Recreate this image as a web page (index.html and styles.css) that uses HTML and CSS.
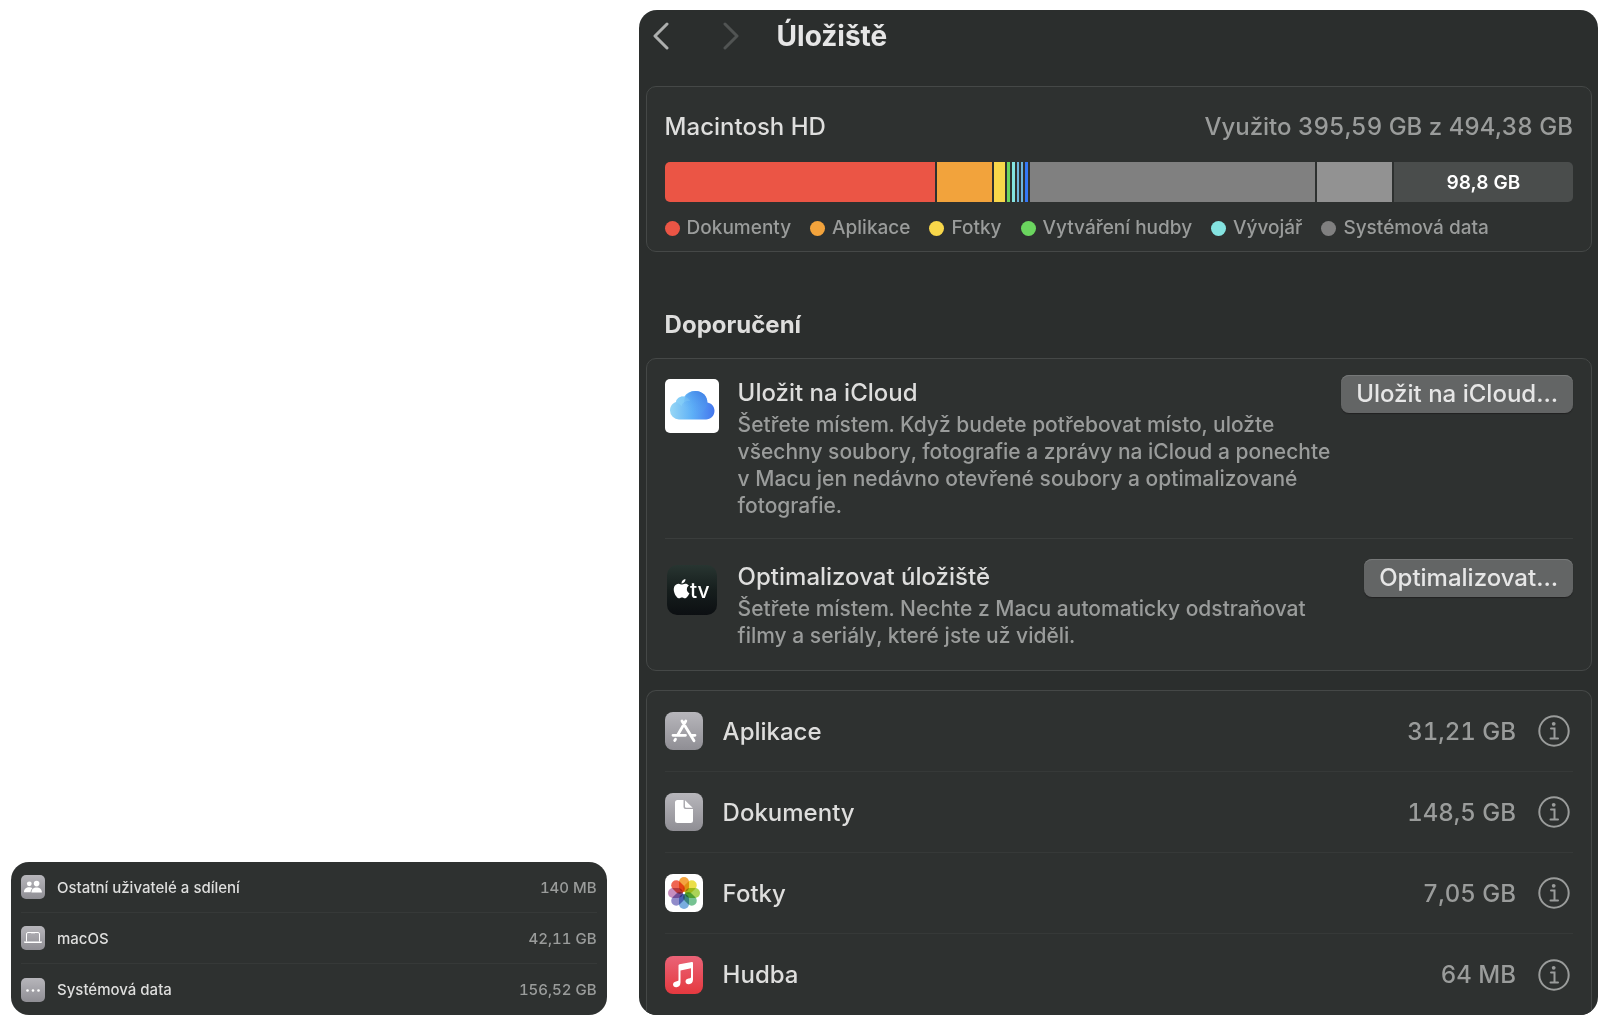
FILE: index.html
```html
<!DOCTYPE html>
<html lang="cs">
<head>
    <meta charset="UTF-8">
    <meta name="viewport" content="width=device-width, initial-scale=1.0">
    <title>Úložiště</title>
    <link rel="stylesheet" href="styles.css">
</head>
<body>
    <aside class="window window-small">
        <ul class="rows">
            <li class="row">
                <svg class="row-icon" viewBox="0 0 24 24" aria-hidden="true">
                    <rect width="24" height="24" rx="5" fill="url(#gray)"/>
                    <g fill="#fff">
                        <circle cx="8.3" cy="8.8" r="2.4"/>
                        <path d="M3 17.2c0-3 2.1-4.9 5.3-4.9 1.3 0 2.4.4 3.2 1-1.2 1-1.8 2.3-1.9 3.9z"/>
                        <circle cx="15.6" cy="8.6" r="2.8"/>
                        <path d="M10.4 17.4c0-3.1 2-5 5.2-5s5.3 1.9 5.3 5z"/>
                    </g>
                </svg>
                <span class="row-name">Ostatní uživatelé a sdílení</span>
                <span class="row-size">140 MB</span>
            </li>
            <li class="row">
                <svg class="row-icon" viewBox="0 0 24 24" aria-hidden="true">
                    <rect width="24" height="24" rx="5" fill="url(#gray)"/>
                    <path d="M5.5 15.5V8q0-1.500 1.500-1.500h10q1.500 0 1.500 1.500v7.500M10 6.800h4" fill="none" stroke="#fff"/>
                    <path d="M3 15.400h18v.6q0 1-1 1H4q-1 0-1-1z" fill="#fff"/>
                </svg>
                <span class="row-name">macOS</span>
                <span class="row-size">42,11 GB</span>
            </li>
            <li class="row">
                <svg class="row-icon" viewBox="0 0 24 24" aria-hidden="true">
                    <rect width="24" height="24" rx="5" fill="url(#gray)"/>
                    <g fill="#fff">
                        <circle cx="6.5" cy="12.5" r="1.3"/>
                        <circle cx="12" cy="12.5" r="1.3"/>
                        <circle cx="17.5" cy="12.5" r="1.3"/>
                    </g>
                </svg>
                <span class="row-name">Systémová data</span>
                <span class="row-size">156,52 GB</span>
            </li>
        </ul>
    </aside>

    <main class="window window-main">
        <header class="titlebar">
            <button class="nav-button" aria-label="Zpět">
                <svg width="16" height="28" viewBox="0 0 16 28"><path d="M14 2 2 14l12 12"/></svg>
            </button>
            <button class="nav-button" aria-label="Vpřed" disabled>
                <svg width="16" height="28" viewBox="0 0 16 28"><path d="M2 2l12 12L2 26"/></svg>
            </button>
            <h1>Úložiště</h1>
        </header>

        <section class="card disk">
            <div class="disk-head">
                <h2>Macintosh HD</h2>
                <span>Využito 395,59 GB z 494,38 GB</span>
            </div>
            <div class="bar">
                <div class="segment red" style="flex-grow: 271"></div>
                <div class="segment orange" style="flex-grow: 56"></div>
                <div class="segment yellow" style="flex-grow: 11"></div>
                <div class="segment green"></div>
                <div class="segment cyan"></div>
                <div class="segment sky"></div>
                <div class="segment sky"></div>
                <div class="segment blue"></div>
                <div class="segment gray" style="flex-grow: 286"></div>
                <div class="segment silver" style="flex-grow: 75"></div>
                <div class="segment free" style="flex-grow: 180">98,8 GB</div>
            </div>
            <ul class="legend">
                <li><i class="dot red"></i>Dokumenty</li>
                <li><i class="dot orange"></i>Aplikace</li>
                <li><i class="dot yellow"></i>Fotky</li>
                <li><i class="dot green"></i>Vytváření hudby</li>
                <li><i class="dot cyan"></i>Vývojář</li>
                <li><i class="dot gray"></i>Systémová data</li>
            </ul>
        </section>

        <h2 class="heading">Doporučení</h2>

        <section class="card tips">
            <article class="tip">
                <svg class="tip-icon" viewBox="0 0 54 54" aria-hidden="true">
                    <rect width="54" height="54" rx="5" fill="#fff"/>
                    <path d="M14 40.5a9 9 0 0 1-9-9c0-4.200 2.600-7.300 6-8.500.6-3.300 4-6 8.200-5.300C21.500 14 25.500 12 30.500 12c7 0 12 5 12 11.500 4 .8 7 4 7 8.300 0 5-3.800 8.700-8.500 8.700z" fill="url(#cloud)"/>
                    <path d="M19.200 17.700c3.300.2 5.300 2.300 6 4.500-4-.7-8.500 1.300-8.500 5.300-1.500-2-3.700-4-5.700-4.500.6-3.300 4-6 8.200-5.300z" fill="#8fd6f8" opacity=".45"/>
                    <circle cx="30.5" cy="23.5" r="11.5" fill="url(#puff)"/>
                </svg>
                <div class="tip-text">
                    <h3>Uložit na iCloud</h3>
                    <p>Šetřete místem. Když budete potřebovat místo, uložte všechny soubory, fotografie a zprávy na iCloud a ponechte v&nbsp;Macu jen nedávno otevřené soubory a optimalizované fotografie.</p>
                </div>
                <button class="push-button">Uložit na iCloud…</button>
            </article>
            <article class="tip">
                <svg class="tip-icon" viewBox="0 0 54 54" aria-hidden="true">
                    <rect x="2" y="2" width="50" height="50" rx="10" fill="url(#tv)"/>
                    <path transform="translate(7 16) scale(.8)" fill="#fff" d="M12.152 6.896c-.948 0-2.415-1.078-3.960-1.040-2.040.027-3.910 1.183-4.961 3.014-2.117 3.675-.546 9.103 1.519 12.090 1.013 1.454 2.208 3.090 3.792 3.039 1.520-.065 2.090-.987 3.935-.987 1.831 0 2.350.987 3.960.948 1.637-.026 2.676-1.480 3.676-2.948 1.156-1.688 1.636-3.325 1.662-3.415-.039-.013-3.182-1.221-3.220-4.857-.026-3.040 2.480-4.494 2.597-4.559-1.429-2.090-3.623-2.324-4.390-2.376-2-.156-3.675 1.090-4.610 1.090zM15.530 3.830c.843-1.012 1.400-2.427 1.245-3.830-1.207.052-2.662.805-3.532 1.818-.780.896-1.454 2.338-1.273 3.714 1.338.104 2.715-.688 3.559-1.701"/>
                    <text class="tv-text" x="25" y="35">tv</text>
                </svg>
                <div class="tip-text">
                    <h3>Optimalizovat úložiště</h3>
                    <p>Šetřete místem. Nechte z Macu automaticky odstraňovat filmy a seriály, které jste už viděli.</p>
                </div>
                <button class="push-button">Optimalizovat…</button>
            </article>
        </section>

        <section class="card categories">
            <ul class="rows">
                <li class="row">
                    <svg class="row-icon" viewBox="0 0 38 38" aria-hidden="true">
                        <rect width="38" height="38" rx="8" fill="url(#gray)"/>
                        <g fill="none" stroke="#fff" stroke-width="2.8" stroke-linecap="round">
                            <path d="M20.800 9 13 22.500M17 9l12 19.800M8 23.300h12.500M26.500 23.300H30M10.500 27.300l-.8 1.300"/>
                        </g>
                    </svg>
                    <span class="row-name">Aplikace</span>
                    <span class="row-size">31,21 GB</span>
                    <button class="info-button" aria-label="Informace: Aplikace"><svg viewBox="0 0 32 32"><use href="#info"/></svg></button>
                </li>
                <li class="row">
                    <svg class="row-icon" viewBox="0 0 38 38" aria-hidden="true">
                        <rect width="38" height="38" rx="8" fill="url(#gray)"/>
                        <path d="M12.500 7H18.500V14q0 2 2 2H28V27.500q0 2.500-2.500 2.500h-13Q10 30 10 27.500v-18Q10 7 12.500 7z" fill="#fff"/>
                        <path d="M20 7.300 27.700 14.800H21.200Q20 14.800 20 13.600z" fill="#fff"/>
                    </svg>
                    <span class="row-name">Dokumenty</span>
                    <span class="row-size">148,5 GB</span>
                    <button class="info-button" aria-label="Informace: Dokumenty"><svg viewBox="0 0 32 32"><use href="#info"/></svg></button>
                </li>
                <li class="row">
                    <svg class="row-icon" viewBox="0 0 38 38" aria-hidden="true">
                        <rect width="38" height="38" rx="8" fill="#fff"/>
                        <g class="petals" transform="translate(19 19)">
                            <rect x="-5" y="-16" width="10" height="15" rx="5" fill="#f39a2b"/>
                            <rect x="-5" y="-16" width="10" height="15" rx="5" fill="#e9dc35" transform="rotate(45)"/>
                            <rect x="-5" y="-16" width="10" height="15" rx="5" fill="#a2cf45" transform="rotate(90)"/>
                            <rect x="-5" y="-16" width="10" height="15" rx="5" fill="#67bb86" transform="rotate(135)"/>
                            <rect x="-5" y="-16" width="10" height="15" rx="5" fill="#6ba4dc" transform="rotate(180)"/>
                            <rect x="-5" y="-16" width="10" height="15" rx="5" fill="#8580c4" transform="rotate(225)"/>
                            <rect x="-5" y="-16" width="10" height="15" rx="5" fill="#c082b8" transform="rotate(270)"/>
                            <rect x="-5" y="-16" width="10" height="15" rx="5" fill="#ee5540" transform="rotate(315)"/>
                        </g>
                        <circle cx="19" cy="19" r="1" fill="#fff"/>
                    </svg>
                    <span class="row-name">Fotky</span>
                    <span class="row-size">7,05 GB</span>
                    <button class="info-button" aria-label="Informace: Fotky"><svg viewBox="0 0 32 32"><use href="#info"/></svg></button>
                </li>
                <li class="row">
                    <svg class="row-icon" viewBox="0 0 38 38" aria-hidden="true">
                        <rect width="38" height="38" rx="8" fill="url(#music)"/>
                        <path d="M13.500 9.500q0-1 1-1.200L26.800 6q1.200-.2 1.200 1V23.500c0 3-1.700 4.500-4 4.800-2 .2-3.500-1-3.500-2.700s1-2.700 3-3.100l1.500-.3q1-.2 1-1.200V12.300L15.500 14.500V26.500c0 3-1.700 4.500-4 4.700-2 .2-3.500-1-3.500-2.700s1.200-2.700 3-3.100l1.500-.3q1-.2 1-1.200z" fill="#fff"/>
                    </svg>
                    <span class="row-name">Hudba</span>
                    <span class="row-size">64 MB</span>
                    <button class="info-button" aria-label="Informace: Hudba"><svg viewBox="0 0 32 32"><use href="#info"/></svg></button>
                </li>
            </ul>
        </section>
    </main>

    <!-- shared gradients and the info symbol -->
    <svg class="defs" width="0" height="0" aria-hidden="true">
        <defs>
            <linearGradient id="gray" x2="0" y2="1"><stop stop-color="#b7b6bb"/><stop offset="1" stop-color="#8f8e94"/></linearGradient>
            <linearGradient id="music" x2="0" y2="1"><stop stop-color="#ea6377"/><stop offset="1" stop-color="#e5393f"/></linearGradient>
            <linearGradient id="tv" x2="0" y2="1"><stop stop-color="#283531"/><stop offset=".5" stop-color="#161e1d"/><stop offset="1" stop-color="#0c0f12"/></linearGradient>
            <linearGradient id="cloud"><stop stop-color="#97d7f5"/><stop offset=".5" stop-color="#5eb0f7"/><stop offset="1" stop-color="#4476ed"/></linearGradient>
            <linearGradient id="puff" x1=".9" y1=".1" x2=".3" y2=".9"><stop stop-color="#4384e6"/><stop offset="1" stop-color="#5aaaf5" stop-opacity="0"/></linearGradient>
            <symbol id="info" viewBox="0 0 32 32">
                <circle cx="16" cy="16" r="14.7" fill="none" stroke="currentColor" stroke-width="2"/>
                <circle cx="15.700" cy="8.800" r="1.9" fill="currentColor"/>
                <path d="M13 13.500h3.500V23.500M12.500 23.500h7.500" fill="none" stroke="currentColor" stroke-width="2" stroke-linecap="round"/>
            </symbol>
        </defs>
    </svg>
</body>
</html>
```

FILE: styles.css
```css
* {
    box-sizing: border-box;
}
body {
    display: grid;
    grid-template-columns: 596fr 960fr;
    align-items: end;
    gap: 32px;
    margin: 0;
    padding: 10px 10px 0 11px;
    background: #fff;
    color: #dededd;
    font-family: Inter, "Liberation Sans", sans-serif;
    font-size: 24px;
    font-weight: 500;
    font-variant-numeric: tabular-nums;
}
h1, h2, h3, p, ul {
    margin: 0;
    padding: 0;
    font-size: inherit;
    font-weight: inherit;
}
ul {
    list-style: none;
}
button {
    border: none;
    background: none;
    padding: 0;
    color: inherit;
    font: inherit;
}
.defs {
    position: absolute;
}
.window {
    border-radius: 18px;
    background: #2b2e2d;
    overflow: hidden;
}
.window-small {
    padding: 0 10px;
    background: #2e3130;
    font-size: 15px;
}
.window-main {
    padding: 0 6px 0 7px;
}

/* title bar */
.titlebar {
    display: flex;
    align-items: center;
    height: 51px;
    padding-left: 7px;
}
.nav-button {
    display: flex;
    width: 16px;
    margin-right: 54px;
    color: #adafae;
}
.nav-button:disabled {
    margin-right: 38px;
    color: #515453;
}
.nav-button svg {
    fill: none;
    stroke: currentColor;
    stroke-width: 3;
    stroke-linecap: round;
    stroke-linejoin: round;
}
h1 {
    font-size: 28px;
    font-weight: 700;
    color: #e6e6e6;
}

/* cards */
.card {
    border: 1px solid #454847;
    border-radius: 10px;
    background: #2e3130;
    padding: 0 18px;
}
.disk {
    margin-top: 25px;
    height: 166px;
    padding-top: 24px;
}
.disk-head {
    display: flex;
    justify-content: space-between;
    line-height: 32px;
}
.disk-head span {
    color: #9a9c9b;
}
.bar {
    display: flex;
    gap: 2px;
    height: 40px;
    margin: 19px 0 14px;
    border-radius: 5px;
    overflow: hidden;
}
.segment {
    flex: 0 0 3px;
}
.segment[style] {
    flex-basis: 0;
}
.segment.sky {
    flex-basis: 2px;
}
.red {
    background: #eb5545;
}
.orange {
    background: #f2a33c;
}
.yellow {
    background: #f8d74a;
}
.green {
    background: #6bd55f;
}
.cyan {
    background: #84e3e0;
}
.sky {
    background: #6fb5dc;
}
.blue {
    background: #3478f6;
}
.gray {
    background: #808080;
}
.silver {
    background: #929292;
}
.free {
    display: flex;
    align-items: center;
    justify-content: center;
    background: #4a4d4c;
    color: #fff;
    font-size: 19px;
    font-weight: 600;
}
.legend {
    display: flex;
    gap: 19px;
    font-size: 19px;
    line-height: 24px;
    color: #9a9c9b;
}
.legend li {
    display: flex;
    align-items: center;
    gap: 7px;
}
.dot {
    width: 15px;
    height: 15px;
    border-radius: 50%;
}

/* recommendations */
.heading {
    margin: 56px 19px 17px;
    line-height: 33px;
    font-weight: 700;
}
.tip {
    display: flex;
    align-items: flex-start;
    padding: 16px 0 19px;
}
.tip + .tip {
    border-top: 1px solid #3a3d3c;
    padding: 20px 0 21px;
}
.tip-icon {
    flex: none;
    width: 54px;
    height: 54px;
    margin: 4px 19px 0 0;
}
.tv-text {
    fill: #fff;
    font-size: 21px;
}
.tip-text {
    flex: 1;
}
.tip-text h3 {
    line-height: 36px;
}
.tip-text p {
    max-width: 600px;
    color: #9a9c9b;
    font-size: 21px;
    line-height: 27px;
}
.push-button {
    height: 38px;
    padding: 0 15px 2px;
    border-radius: 8px;
    background: #636565;
    box-shadow: inset 0 1px #767878, 0 1px 1px #222;
    color: #e6e6e6;
}

/* lists */
.row {
    display: flex;
    align-items: center;
    height: 51px;
    border-bottom: 1px solid #363938;
}
.row:last-child {
    border-bottom: none;
}
.row-icon {
    width: 24px;
    height: 24px;
    margin-right: 12px;
}
.row-name {
    flex: 1;
}
.row-size {
    color: #9a9c9b;
}
.categories {
    margin-top: 19px;
    border-bottom: none;
    border-radius: 10px 10px 0 0;
}
.categories .row {
    height: 81px;
}
.categories .row-icon {
    width: 38px;
    height: 38px;
    margin-right: 20px;
}
.petals rect {
    mix-blend-mode: multiply;
    opacity: .9;
}
.info-button {
    display: flex;
    width: 32px;
    height: 32px;
    margin: 0 3px 0 22px;
    color: #9a9c9b;
}
```
